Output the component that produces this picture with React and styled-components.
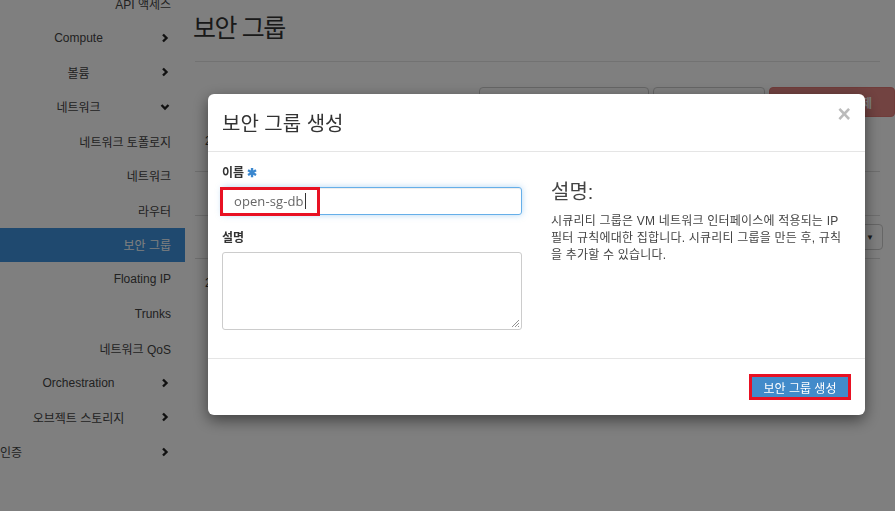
import React from 'react';
import styled, { createGlobalStyle } from 'styled-components';

const GlobalStyle = createGlobalStyle`
  html, body {
    margin: 0;
    padding: 0;
    width: 895px;
    height: 511px;
    overflow: hidden;
    background: #fff;
    font-family: "Liberation Sans", "Noto Sans CJK KR", sans-serif;
    color: #333;
  }
  * { box-sizing: border-box; }
`;

const Page = styled.div`
  display: flex;
  width: 895px;
  height: 511px;
  overflow: hidden;
`;

const Sidebar = styled.nav`
  width: 185px;
  flex-shrink: 0;
  margin-top: -14px;
  display: flex;
  flex-direction: column;
`;

const NavRow = styled.div`
  height: 34.5px;
  display: flex;
  align-items: center;
  font-size: 12px;
  color: ${({ $active }) => ($active ? '#fff' : '#444')};
  background: ${({ $active }) => ($active ? '#3f93de' : 'transparent')};
`;

const SubLabel = styled.span`
  flex: 1;
  text-align: right;
  padding-right: 14px;
`;

const ParentLabel = styled.span`
  width: 160px;
  text-align: ${({ $align }) => $align || 'center'};
  padding-right: 3px;
`;

const Chevron = styled.span`
  display: flex;
  align-items: center;
  width: 12px;
`;

const Main = styled.main`
  flex: 1;
  padding: 0 15px 0 10px;
  display: flex;
  flex-direction: column;
`;

const PageTitle = styled.h1`
  margin: 12px 0 0 -2px;
  font-size: 25px;
  font-weight: 400;
  letter-spacing: -1.4px;
  line-height: 32px;
  color: #333;
`;

const Divider = styled.hr`
  margin: 17px 0 0;
  border: 0;
  border-top: 1px solid #e4e4e4;
`;

const Toolbar = styled.div`
  display: flex;
  justify-content: flex-end;
  gap: 4px;
  margin: 25px -15px 0 0;
  height: 30px;
`;

const SearchBox = styled.div`
  width: 170px;
  border: 1px solid #ccc;
  border-radius: 4px;
`;

const ToolButton = styled.div`
  width: ${({ $w }) => $w}px;
  border: 1px solid ${({ $danger }) => ($danger ? '#d43f3a' : '#ccc')};
  background: ${({ $danger }) => ($danger ? '#d9534f' : '#fff')};
  opacity: ${({ $danger }) => ($danger ? 0.7 : 1)};
  border-radius: 4px;
  color: #fff;
  font-size: 12px;
  font-weight: 700;
  display: flex;
  align-items: center;
  justify-content: flex-end;
  padding-right: 22px;
`;

const CountText = styled.div`
  font-size: 12px;
  margin: 14px 0 0 10px;
  color: #333;
  height: 16px;
`;

const Spacer = styled.div`
  height: ${({ $h }) => $h}px;
`;

const TableRow = styled.div`
  height: ${({ $h }) => $h}px;
  border-top: 1px solid #ddd;
  display: flex;
  align-items: center;
  justify-content: flex-end;
`;

const RowSelect = styled.div`
  width: 40px;
  height: 26px;
  margin-right: -3px;
  border: 1px solid #ccc;
  border-radius: 4px;
  display: flex;
  align-items: center;
  justify-content: flex-end;
  padding-right: 8px;
  font-size: 8px;
  color: #333;
`;

const Overlay = styled.div`
  position: fixed;
  inset: 0;
  background: rgba(0, 0, 0, 0.5);
`;

const Modal = styled.div`
  position: fixed;
  top: 94px;
  left: 208px;
  width: 657px;
  background: #fff;
  border-radius: 6px;
  box-shadow: 0 5px 15px rgba(0, 0, 0, 0.5);
  display: flex;
  flex-direction: column;
`;

const ModalHeader = styled.div`
  height: 58px;
  padding: 0 14px 0 14px;
  border-bottom: 1px solid #e5e5e5;
  display: flex;
  align-items: center;
  justify-content: space-between;
`;

const ModalTitle = styled.h4`
  margin: 0;
  font-size: 20px;
  font-weight: 400;
  color: #333;
`;

const CloseButton = styled.span`
  font-size: 23px;
  font-weight: 700;
  color: #bbb;
  line-height: 1;
  margin-top: -17px;
`;

const ModalBody = styled.div`
  padding: 13px 15px 28px 14px;
  display: grid;
  grid-template-columns: 300px 1fr;
  column-gap: 29px;
`;

const FormColumn = styled.div`
  display: flex;
  flex-direction: column;
`;

const Label = styled.label`
  font-size: 12px;
  font-weight: 700;
  color: #333;
  line-height: 17px;
  margin-bottom: 5px;
  margin-top: ${({ $first }) => ($first ? 0 : 15)}px;
`;

const Required = styled.span`
  color: #3a87cf;
  margin-left: 3px;
`;

const InputWrap = styled.div`
  position: relative;
  height: 28px;
  border: 1px solid #66afe9;
  border-radius: 3px;
  box-shadow: inset 0 1px 1px rgba(0, 0, 0, 0.075), 0 0 6px rgba(102, 175, 233, 0.5);
  display: flex;
  align-items: center;
  padding-left: 11px;
  font-family: "Open Sans", "Liberation Sans", sans-serif;
  font-size: 13px;
  letter-spacing: 0.1px;
  color: #666;
`;

const Caret = styled.span`
  display: inline-block;
  width: 1px;
  height: 16px;
  background: #333;
  margin-left: 1px;
`;

const Highlight = styled.span`
  position: absolute;
  left: -3px;
  top: -1px;
  width: 100px;
  height: 29px;
  border: 3px solid #e81123;
`;

const TextArea = styled.div`
  position: relative;
  height: 78px;
  border: 1px solid #ccc;
  border-radius: 3px;
`;

const Grip = styled.svg`
  position: absolute;
  right: 1px;
  bottom: 1px;
`;

const HelpColumn = styled.div`
  padding-top: 15px;
`;

const HelpTitle = styled.h3`
  margin: 0 0 9px;
  font-size: 20px;
  font-weight: 400;
  line-height: 24px;
  color: #444;
`;

const HelpText = styled.p`
  margin: 0;
  font-size: 12px;
  line-height: 17px;
  color: #444;
  letter-spacing: 0.2px;
  white-space: nowrap;
`;

const ModalFooter = styled.div`
  height: 57px;
  border-top: 1px solid #e5e5e5;
  display: flex;
  align-items: center;
  justify-content: flex-end;
  padding-right: 14px;
`;

const PrimaryButton = styled.button`
  height: 26px;
  width: 102px;
  border: 3px solid #e81123;
  background: #428bca;
  color: #fff;
  font-family: inherit;
  font-size: 12px;
  padding: 0;
`;

const ChevronIcon = ({ down }) => (
  <svg width="10" height="10" viewBox="0 0 10 10">
    <path
      d={down ? 'M1.5 3 L5 6.5 L8.5 3' : 'M3 1.5 L6.5 5 L3 8.5'}
      fill="none"
      stroke="#222"
      strokeWidth="2.4"
    />
  </svg>
);

const navItems = [
  { label: 'API 액세스', sub: true },
  { label: 'Compute' },
  { label: '볼륨' },
  { label: '네트워크', open: true },
  { label: '네트워크 토폴로지', sub: true },
  { label: '네트워크', sub: true },
  { label: '라우터', sub: true },
  { label: '보안 그룹', sub: true, active: true },
  { label: 'Floating IP', sub: true },
  { label: 'Trunks', sub: true },
  { label: '네트워크 QoS', sub: true },
  { label: 'Orchestration' },
  { label: '오브젝트 스토리지' },
  { label: '인증', align: 'left' },
];

const App = () => (
  <>
    <GlobalStyle />
    <Page>
      <Sidebar>
        {navItems.map((item, idx) => (
          <NavRow key={idx} $active={item.active}>
            {item.sub ? (
              <SubLabel>{item.label}</SubLabel>
            ) : (
              <>
                <ParentLabel $align={item.align}>{item.label}</ParentLabel>
                <Chevron>
                  <ChevronIcon down={item.open} />
                </Chevron>
              </>
            )}
          </NavRow>
        ))}
      </Sidebar>
      <Main>
        <PageTitle>보안 그룹</PageTitle>
        <Divider />
        <Toolbar>
          <SearchBox />
          <ToolButton $w={112} />
          <ToolButton $w={126} $danger>보안 그룹 삭제</ToolButton>
        </Toolbar>
        <CountText>2 항목 표시</CountText>
        <Spacer $h={24} />
        <TableRow $h={44} />
        <TableRow $h={43}>
          <RowSelect>▼</RowSelect>
        </TableRow>
        <TableRow $h={1} />
        <CountText>2 항목 표시</CountText>
      </Main>
    </Page>
    <Overlay />
    <Modal>
      <ModalHeader>
        <ModalTitle>보안 그룹 생성</ModalTitle>
        <CloseButton>×</CloseButton>
      </ModalHeader>
      <ModalBody>
        <FormColumn>
          <Label $first>
            이름<Required>✱</Required>
          </Label>
          <InputWrap>
            open-sg-db<Caret />
            <Highlight />
          </InputWrap>
          <Label>설명</Label>
          <TextArea>
            <Grip width="10" height="10" viewBox="0 0 10 10">
              <path d="M9 2 L2 9 M9 5 L5 9 M9 8 L8 9" stroke="#777" strokeWidth="0.8" />
            </Grip>
          </TextArea>
        </FormColumn>
        <HelpColumn>
          <HelpTitle>설명:</HelpTitle>
          <HelpText>
            시큐리티 그룹은 VM 네트워크 인터페이스에 적용되는 IP
            <br />
            필터 규칙에대한 집합니다. 시큐리티 그룹을 만든 후, 규칙
            <br />을 추가할 수 있습니다.
          </HelpText>
        </HelpColumn>
      </ModalBody>
      <ModalFooter>
        <PrimaryButton>보안 그룹 생성</PrimaryButton>
      </ModalFooter>
    </Modal>
  </>
);

export default App;
